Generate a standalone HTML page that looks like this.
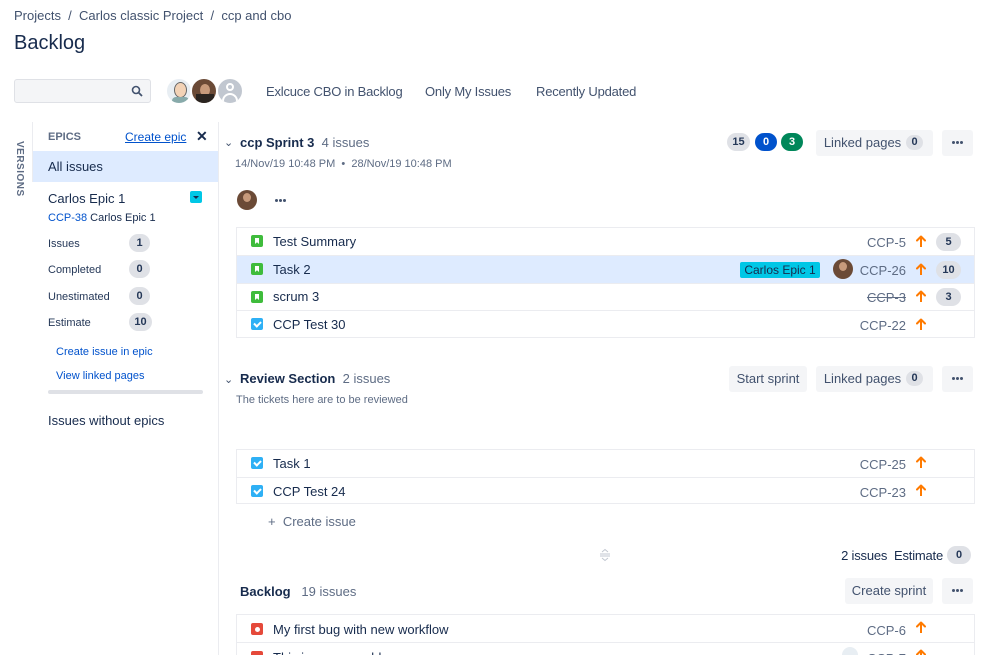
<!DOCTYPE html>
<html><head><meta charset="utf-8"><style>
*{margin:0;padding:0;box-sizing:border-box}
html,body{width:999px;height:655px;overflow:hidden}
body{background:#fff;font-family:"Liberation Sans",sans-serif;color:#172b4d;position:relative}
.a{position:absolute;white-space:nowrap;line-height:16px}
.g{color:#5e6c84}
.s{font-size:13px}
.b{color:#0052cc}
.pill{position:absolute;height:18px;border-radius:9px;background:#dfe1e6;font-size:11px;font-weight:bold;text-align:center;line-height:18px;color:#253858}
.btn{position:absolute;height:26px;border-radius:3px;background:#f4f5f7;font-size:13px;color:#42526e;line-height:26px;text-align:center}
.dots{position:absolute;height:26px;width:31px;border-radius:3px;background:#f4f5f7}
.dots:after,.dd:after{content:"";position:absolute;left:10px;top:11px;width:3px;height:3px;border-radius:50%;background:#42526e;box-shadow:4px 0 #42526e,8px 0 #42526e}
.dd{position:absolute;width:20px;height:20px}
.row{position:absolute;left:236px;width:739px;border:1px solid #ebecf0;border-top:none;height:28px}
.tbl{position:absolute;left:236px;width:739px;border-top:1px solid #ebecf0}
.ico{position:absolute;width:12px;height:12px;border-radius:2px}
.story{background:#3fbc3c}
.story:after{content:"";position:absolute;left:4px;top:3px;width:4px;height:6px;background:#fff;clip-path:polygon(0 0,100% 0,100% 100%,50% 70%,0 100%)}
.task{background:#2eb0f5}
.task:after{content:"";position:absolute;left:3px;top:3px;width:5px;height:3px;border-left:2px solid #fff;border-bottom:2px solid #fff;transform:rotate(-45deg)}
.bug{background:#e5493a}
.bug:after{content:"";position:absolute;left:3.5px;top:3.5px;width:5px;height:5px;border-radius:50%;background:#fff}
.up{position:absolute;width:10px;height:12px}
.av{position:absolute;border-radius:50%;overflow:hidden}
</style></head><body>
<svg width="0" height="0" style="position:absolute"><defs><g id="arr"><path d="M5 12V2M1 5.5L5 1.5L9 5.5" fill="none" stroke="#ff7a00" stroke-width="2" stroke-linecap="round" stroke-linejoin="round"/></g></defs></svg>
<div class="a s" style="left:14px;top:8px;color:#42526e">Projects&nbsp;&nbsp;/&nbsp;&nbsp;Carlos classic Project&nbsp;&nbsp;/&nbsp;&nbsp;ccp and cbo</div>
<div class="a" style="left:14px;top:31px;font-size:20px;line-height:24px">Backlog</div>

<div style="position:absolute;left:14px;top:79px;width:137px;height:24px;background:#f4f5f7;border:1px solid #dfe1e6;border-radius:3px"></div>
<svg style="position:absolute;left:131px;top:85px" width="12" height="12" viewBox="0 0 12 12"><circle cx="5" cy="5" r="3.5" fill="none" stroke="#42526e" stroke-width="1.6"/><path d="M7.5 7.5L11 11" stroke="#42526e" stroke-width="1.8"/></svg>

<div class="av" style="left:165px;top:77px;width:28px;height:28px;background:#e8eef3;border:2px solid #fff"><div style="position:absolute;left:7px;top:3px;width:13px;height:16px;border-radius:50%;background:#f2d2b6;border:1px solid #666"></div><div style="position:absolute;left:5px;top:18px;width:17px;height:10px;background:#8aa;border-radius:4px 4px 0 0"></div></div>
<div class="av" style="left:190px;top:77px;width:28px;height:28px;background:#6b4a36;border:2px solid #fff"><div style="position:absolute;left:8px;top:5px;width:10px;height:12px;border-radius:50%;background:#c79a7b"></div><div style="position:absolute;left:4px;top:15px;width:18px;height:12px;background:#2a2420"></div></div>
<div class="av" style="left:216px;top:77px;width:28px;height:28px;background:#c1c7d0;border:2px solid #fff"><div style="position:absolute;left:8px;top:4px;width:8px;height:8px;border-radius:50%;border:2px solid #fff;background:#c1c7d0"></div><div style="position:absolute;left:4px;top:14px;width:16px;height:12px;border-radius:8px 8px 0 0;border:2px solid #fff;border-bottom:none"></div></div>

<div class="a s" style="left:266px;top:84px;color:#42526e;letter-spacing:-0.2px">Exlcuce CBO in Backlog</div>
<div class="a s" style="left:425px;top:84px;color:#42526e;letter-spacing:-0.2px">Only My Issues</div>
<div class="a s" style="left:536px;top:84px;color:#42526e;letter-spacing:-0.2px">Recently Updated</div>

<!-- sidebar -->
<div class="a" style="font-size:10px;font-weight:bold;color:#5e6c84;transform:rotate(90deg);letter-spacing:0.5px;width:50px;left:-6px;top:158px">VERSIONS</div>
<div style="position:absolute;left:32px;top:122px;width:1px;height:60px;background:#ebecf0"></div>
<div style="position:absolute;left:218px;top:122px;width:1px;height:533px;background:#ebecf0"></div>
<div class="a" style="left:48px;top:129px;font-size:11px;font-weight:bold;color:#5e6c84">EPICS</div>
<div class="a" style="left:125px;top:129px;font-size:12px;color:#0052cc;text-decoration:underline">Create epic</div>
<div class="a" style="left:196px;top:128px;font-size:14px;font-weight:bold;color:#172b4d">✕</div>
<div style="position:absolute;left:33px;top:151px;width:185px;height:31px;background:#deebff"></div>
<div class="a s" style="left:48px;top:159px">All issues</div>
<div class="a s" style="left:48px;top:191px">Carlos Epic 1</div>
<div style="position:absolute;left:190px;top:191px;width:12px;height:12px;background:#00c7e6;border-radius:2px"></div>
<div style="position:absolute;left:193px;top:196px;border:3px solid transparent;border-top:3px solid #172b4d"></div>
<div class="a" style="left:48px;top:210px;font-size:11px"><span class="b">CCP-38</span> Carlos Epic 1</div>
<div class="a" style="left:48px;top:236px;font-size:11px;color:#253858">Issues</div>
<div class="a" style="left:48px;top:262px;font-size:11px;color:#253858">Completed</div>
<div class="a" style="left:48px;top:289px;font-size:11px;color:#253858">Unestimated</div>
<div class="a" style="left:48px;top:315px;font-size:11px;color:#253858">Estimate</div>
<div class="pill" style="left:129px;top:234px;width:21px">1</div>
<div class="pill" style="left:129px;top:260px;width:21px">0</div>
<div class="pill" style="left:129px;top:287px;width:21px">0</div>
<div class="pill" style="left:129px;top:313px;width:23px">10</div>
<div class="a b" style="left:56px;top:344px;font-size:11px">Create issue in epic</div>
<div class="a b" style="left:56px;top:368px;font-size:11px">View linked pages</div>
<div style="position:absolute;left:48px;top:390px;width:155px;height:4px;border-radius:2px;background:#dfe1e6"></div>
<div class="a s" style="left:48px;top:413px">Issues without epics</div>

<!-- sprint 3 -->
<div class="a" style="left:224px;top:135px;font-size:11px;color:#42526e">⌄</div>
<div class="a s" style="left:240px;top:135px"><b>ccp Sprint 3</b>&nbsp;&nbsp;<span class="g">4 issues</span></div>
<div class="a g" style="left:235px;top:156px;font-size:11px">14/Nov/19 10:48 PM&nbsp;&nbsp;•&nbsp;&nbsp;28/Nov/19 10:48 PM</div>
<div class="pill" style="left:727px;top:133px;width:23px;color:#253858">15</div>
<div class="pill" style="left:755px;top:133px;width:22px;background:#0052cc;color:#fff">0</div>
<div class="pill" style="left:781px;top:133px;width:22px;background:#00875a;color:#fff">3</div>
<div class="btn" style="left:816px;top:130px;width:117px;padding-right:24px">Linked pages</div>
<div class="pill" style="left:906px;top:135px;width:17px;height:15px;line-height:15px">0</div>
<div class="dots" style="left:942px;top:130px"></div>

<div class="av" style="left:237px;top:190px;width:20px;height:20px;background:#6b4a36"><div style="position:absolute;left:6px;top:3px;width:8px;height:9px;border-radius:50%;background:#c79a7b"></div></div>
<div class="dd" style="left:265px;top:188px"></div>

<div class="tbl" style="top:227px"></div>
<div class="row" style="top:228px"></div>
<div class="row" style="top:256px;background:#deebff"></div>
<div class="row" style="top:284px;height:27px"></div>
<div class="row" style="top:311px;height:27px"></div>
<div class="ico story" style="left:251px;top:235px"></div>
<div class="ico story" style="left:251px;top:263px"></div>
<div class="ico story" style="left:251px;top:291px"></div>
<div class="ico task" style="left:251px;top:318px"></div>
<div class="a s" style="left:273px;top:234px">Test Summary</div>
<div class="a s" style="left:273px;top:262px">Task 2</div>
<div class="a s" style="left:273px;top:289px">scrum 3</div>
<div class="a s" style="left:273px;top:317px">CCP Test 30</div>
<div style="position:absolute;left:740px;top:262px;width:80px;height:16px;background:#00c7e6;border-radius:2px;font-size:12px;line-height:16px;text-align:center;color:#172b4d">Carlos Epic 1</div>
<div class="av" style="left:833px;top:259px;width:20px;height:20px;background:#6b4a36"><div style="position:absolute;left:6px;top:3px;width:8px;height:9px;border-radius:50%;background:#c79a7b"></div></div>
<div class="a s g" style="right:93px;top:235px">CCP-5</div>
<div class="a s g" style="right:93px;top:263px">CCP-26</div>
<div class="a s g" style="right:93px;top:290px;text-decoration:line-through">CCP-3</div>
<div class="a s g" style="right:93px;top:318px">CCP-22</div>
<svg class="up" style="left:916px;top:235px"><use href="#arr"/></svg>
<svg class="up" style="left:916px;top:263px"><use href="#arr"/></svg>
<svg class="up" style="left:916px;top:290px"><use href="#arr"/></svg>
<svg class="up" style="left:916px;top:318px"><use href="#arr"/></svg>
<div class="pill" style="left:936px;top:233px;width:25px">5</div>
<div class="pill" style="left:936px;top:261px;width:25px">10</div>
<div class="pill" style="left:936px;top:288px;width:25px">3</div>

<!-- review -->
<div class="a" style="left:224px;top:372px;font-size:11px;color:#42526e">⌄</div>
<div class="a s" style="left:240px;top:371px"><b>Review Section</b>&nbsp;&nbsp;<span class="g">2 issues</span></div>
<div class="a g" style="left:236px;top:392px;font-size:11px">The tickets here are to be reviewed</div>
<div class="btn" style="left:729px;top:366px;width:78px">Start sprint</div>
<div class="btn" style="left:816px;top:366px;width:117px;padding-right:24px">Linked pages</div>
<div class="pill" style="left:906px;top:371px;width:17px;height:15px;line-height:15px">0</div>
<div class="dots" style="left:942px;top:366px"></div>
<div class="tbl" style="top:449px"></div>
<div class="row" style="top:450px"></div>
<div class="row" style="top:478px;height:26px"></div>
<div class="ico task" style="left:251px;top:457px"></div>
<div class="ico task" style="left:251px;top:485px"></div>
<div class="a s" style="left:273px;top:456px">Task 1</div>
<div class="a s" style="left:273px;top:484px">CCP Test 24</div>
<div class="a s g" style="right:93px;top:457px">CCP-25</div>
<div class="a s g" style="right:93px;top:485px">CCP-23</div>
<svg class="up" style="left:916px;top:456px"><use href="#arr"/></svg>
<svg class="up" style="left:916px;top:484px"><use href="#arr"/></svg>
<div class="a s g" style="left:268px;top:514px">+&nbsp;&nbsp;Create issue</div>
<svg style="position:absolute;left:599px;top:548px" width="12" height="14" viewBox="0 0 12 14"><path d="M3 4L6 1.5L9 4M1 6h10M1 8h10M3 10L6 12.5L9 10" fill="none" stroke="#c1c7d0" stroke-width="1"/></svg>
<div class="a s" style="right:56px;top:548px;letter-spacing:-0.2px">2 issues&nbsp;&nbsp;Estimate</div>
<div class="pill" style="left:947px;top:546px;width:24px">0</div>

<!-- backlog -->
<div class="a s" style="left:240px;top:584px"><b>Backlog</b>&nbsp;&nbsp;&nbsp;<span class="g">19 issues</span></div>
<div class="btn" style="left:845px;top:578px;width:88px">Create sprint</div>
<div class="dots" style="left:942px;top:578px"></div>
<div class="tbl" style="top:614px"></div>
<div class="row" style="top:615px"></div>
<div class="row" style="top:643px"></div>
<div class="ico bug" style="left:251px;top:623px"></div>
<div class="ico bug" style="left:251px;top:651px"></div>
<div class="a s" style="left:273px;top:622px">My first bug with new workflow</div>
<div class="a s" style="left:273px;top:650px">This is a new problem</div>
<div class="a s g" style="right:93px;top:623px">CCP-6</div>
<div class="a s g" style="right:93px;top:651px">CCP-7</div>
<svg class="up" style="left:916px;top:621px"><use href="#arr"/></svg>
<svg class="up" style="left:916px;top:649px"><use href="#arr"/></svg>
<div class="av" style="left:842px;top:647px;width:16px;height:16px;background:#e8eef3"></div>
</body></html>
